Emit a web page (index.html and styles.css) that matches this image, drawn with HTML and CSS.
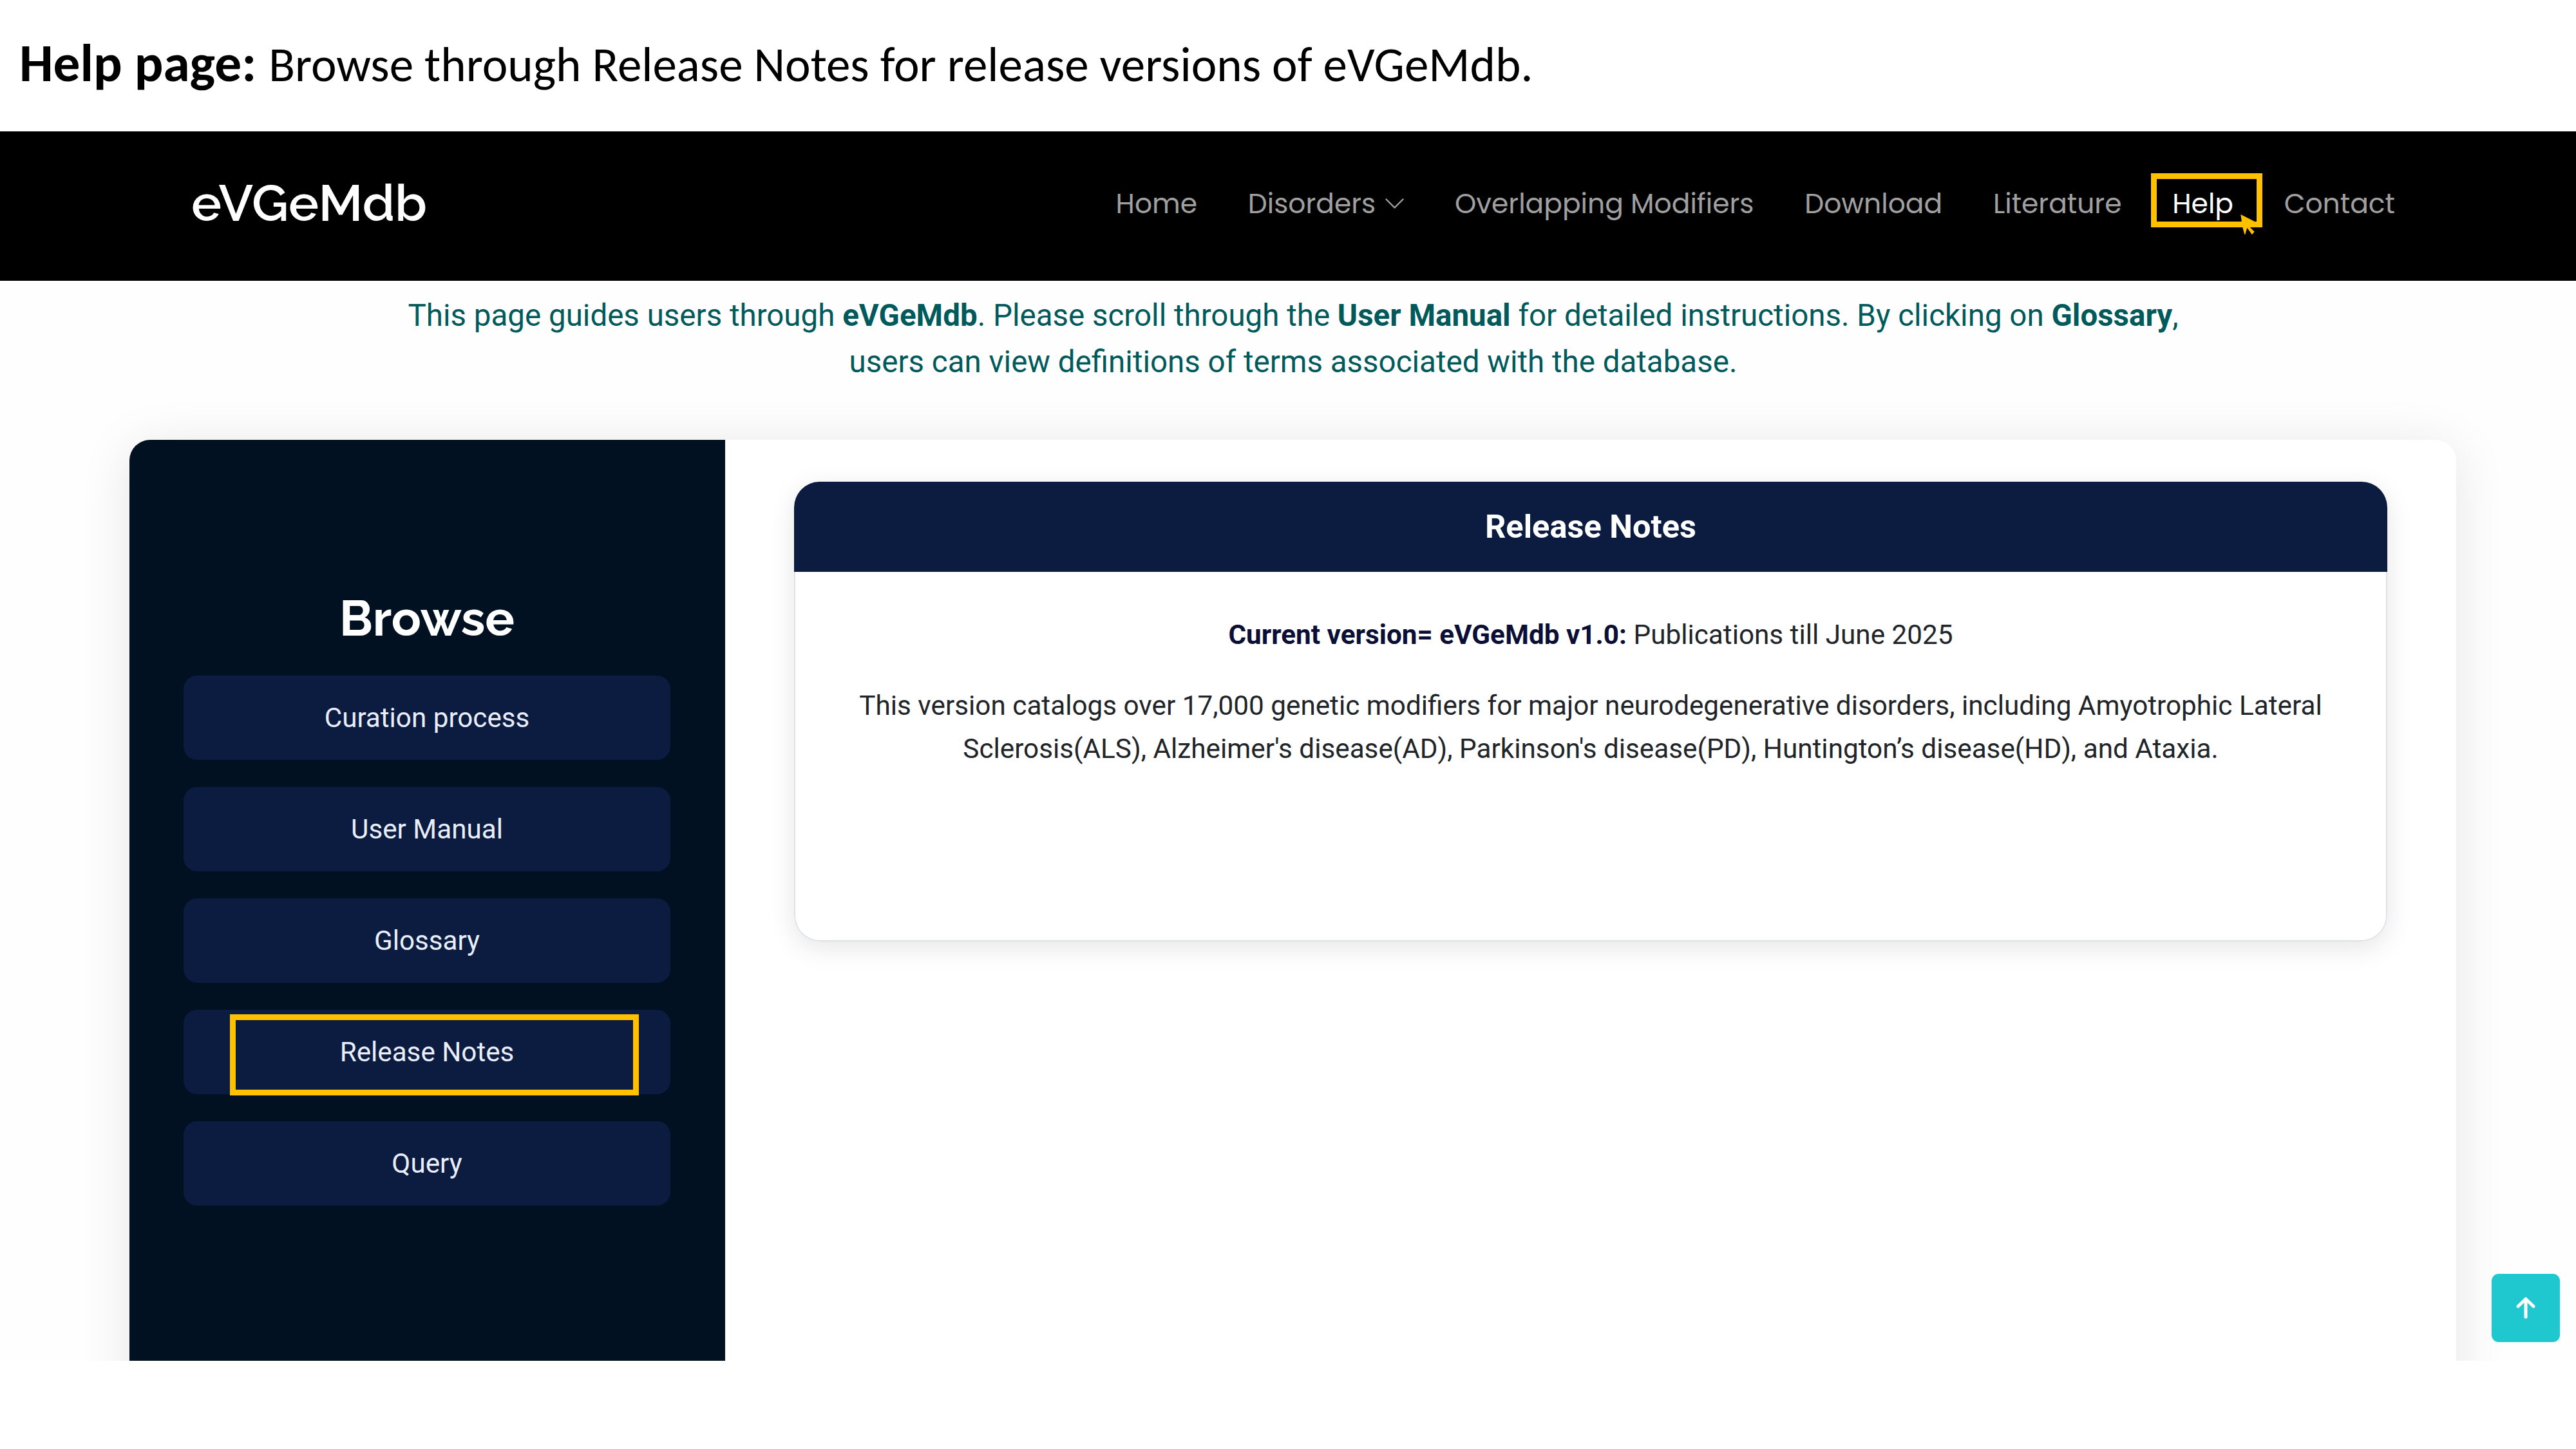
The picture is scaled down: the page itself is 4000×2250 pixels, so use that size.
FILE: index.html
```
<!DOCTYPE html>
<html lang="en">
<head>
<meta charset="utf-8">
<title>eVGeMdb – Help</title>
<link rel="stylesheet" href="styles.css">
</head>
<body>
<h1 class="caption"><strong>Help page:</strong> Browse through Release Notes for release versions of eVGeMdb.</h1>
<div class="screen">
  <header class="header">
    <a class="logo">eVGeMdb</a>
    <nav class="nav">
      <a class="nav-link">Home</a>
      <a class="nav-link">Disorders<svg class="chevron" viewBox="0 0 29 16"><path d="M1.5 1.5l13 13 13-13" fill="none" stroke="currentColor" stroke-width="2.4" stroke-linecap="round" stroke-linejoin="round"/></svg></a>
      <a class="nav-link">Overlapping Modifiers</a>
      <a class="nav-link">Download</a>
      <a class="nav-link">Literature</a>
      <a class="nav-link active">Help<span class="mark mark-help"></span><svg class="cursor" viewBox="0 0 66 96"><path d="M1 0L65 32L42 39V58L65 80L54 94L31 62L22 93H19L9 57Z" fill="#ffc000"/></svg></a>
      <a class="nav-link">Contact</a>
    </nav>
  </header>
  <p class="intro">This page guides users through <b>eVGeMdb</b>. Please scroll through the <b>User Manual</b> for detailed instructions. By clicking on <b>Glossary</b>,<br>users can view definitions of terms associated with the database.</p>
  <main class="panel">
    <aside class="sidebar">
      <h2 class="browse">Browse</h2>
      <a class="item">Curation process</a>
      <a class="item">User Manual</a>
      <a class="item">Glossary</a>
      <a class="item">Release Notes<span class="mark mark-notes"></span></a>
      <a class="item">Query</a>
    </aside>
    <section class="content">
      <article class="card">
        <h3 class="card-title">Release Notes</h3>
        <div class="card-body">
          <p><b>Current version= eVGeMdb v1.0:</b> Publications till June 2025</p>
          <p>This version catalogs over 17,000 genetic modifiers for major neurodegenerative disorders, including Amyotrophic Lateral<br>Sclerosis(ALS), Alzheimer's disease(AD), Parkinson's disease(PD), Huntington’s disease(HD), and Ataxia.</p>
        </div>
      </article>
    </section>
  </main>
  <a class="to-top"><svg viewBox="0 0 30 34"><path d="M15 31V3M3 14.5L15 3l12 11.5" fill="none" stroke="#fff" stroke-width="5" stroke-linecap="round" stroke-linejoin="round"/></svg></a>
</div>
</body>
</html>
```
FILE: styles.css
```
* { box-sizing: border-box; margin: 0; padding: 0; }
body { width: 4000px; height: 2250px; overflow: hidden; background: #fff; font-family: Roboto, sans-serif; color: #212529; }

.caption { height: 204px; padding: 50px 0 0 30px; font: 400 75.1px/100px Carlito, Calibri, Lato, sans-serif; color: #000; white-space: nowrap; }
.caption strong { margin-right: 2px; font-size: 83.4px; line-height: 1; }

.screen { position: relative; height: 1909px; overflow: hidden; background: #fefefe; }

.header { display: flex; align-items: center; justify-content: space-between; height: 232px; padding: 0 281px 6px 297px; background: #000; }
.logo { padding-bottom: 3px; font: 600 79.2px/1 Raleway, Lato, sans-serif; color: #fff; }
.nav { display: flex; gap: 78.8px; padding-bottom: 2px; font: 400 42.4px/64px Poppins, Inter, sans-serif; color: #a0a0a0; }
.nav-link { position: relative; display: flex; align-items: center; white-space: nowrap; }
.active { color: #fff; }
.chevron { width: 29px; height: 16px; margin-left: 15px; }

.mark { position: absolute; border: 9px solid #ffc000; }
.mark-help { left: -33px; top: -15px; width: 173px; height: 84px; }
.cursor { position: absolute; left: 106px; top: 49px; width: 22px; height: 32px; }

.intro { height: 247px; padding-top: 18px; padding-left: 16px; text-align: center; font-size: 47.5px; line-height: 72px; color: #005a5c; white-space: nowrap; }

.panel { display: flex; width: 3613px; height: 1600px; margin-left: 201px; border-radius: 32px; background: #fff; box-shadow: 0 10px 80px rgba(0, 0, 0, .1); }
.sidebar { display: flex; flex-direction: column; gap: 42px; width: 925px; padding: 230px 85px 0 84px; border-radius: 32px 0 0 0; background: #021122; }
.browse { height: 94px; text-align: center; font: 700 76.3px/95px Raleway, Lato, sans-serif; color: #fff; }
.item { position: relative; display: flex; align-items: center; justify-content: center; height: 131px; border-radius: 21px; background: #0b1c40; color: #eaeefa; font-size: 42.2px; font-weight: 450; }
.mark-notes { left: 72px; top: 7px; width: 635px; height: 126px; }

.content { flex: 1; padding: 65px 107px 0 107px; }
.card { height: 714px; overflow: hidden; border-radius: 40px; background: #fff; box-shadow: 0 10px 40px rgba(0, 0, 0, .1); }
.card-title { height: 140px; text-align: center; font-size: 50.6px; font-weight: 700; line-height: 140px; background: #0b1c40; color: #fff; }
.card-body { height: 574px; padding-top: 64px; border: 2px solid #dee2e6; border-top: 0; border-radius: 0 0 40px 40px; text-align: center; font-size: 42.25px; line-height: 67.6px; white-space: nowrap; }
.card-body p + p { margin-top: 42px; }
.card-body b { font-weight: 700; color: #0b0f35; }

.to-top { position: absolute; left: 3869px; top: 1774px; display: flex; align-items: center; justify-content: center; width: 106px; height: 106px; border-radius: 11px; background: #1ec8ce; }
.to-top svg { width: 30px; height: 34px; }
```
